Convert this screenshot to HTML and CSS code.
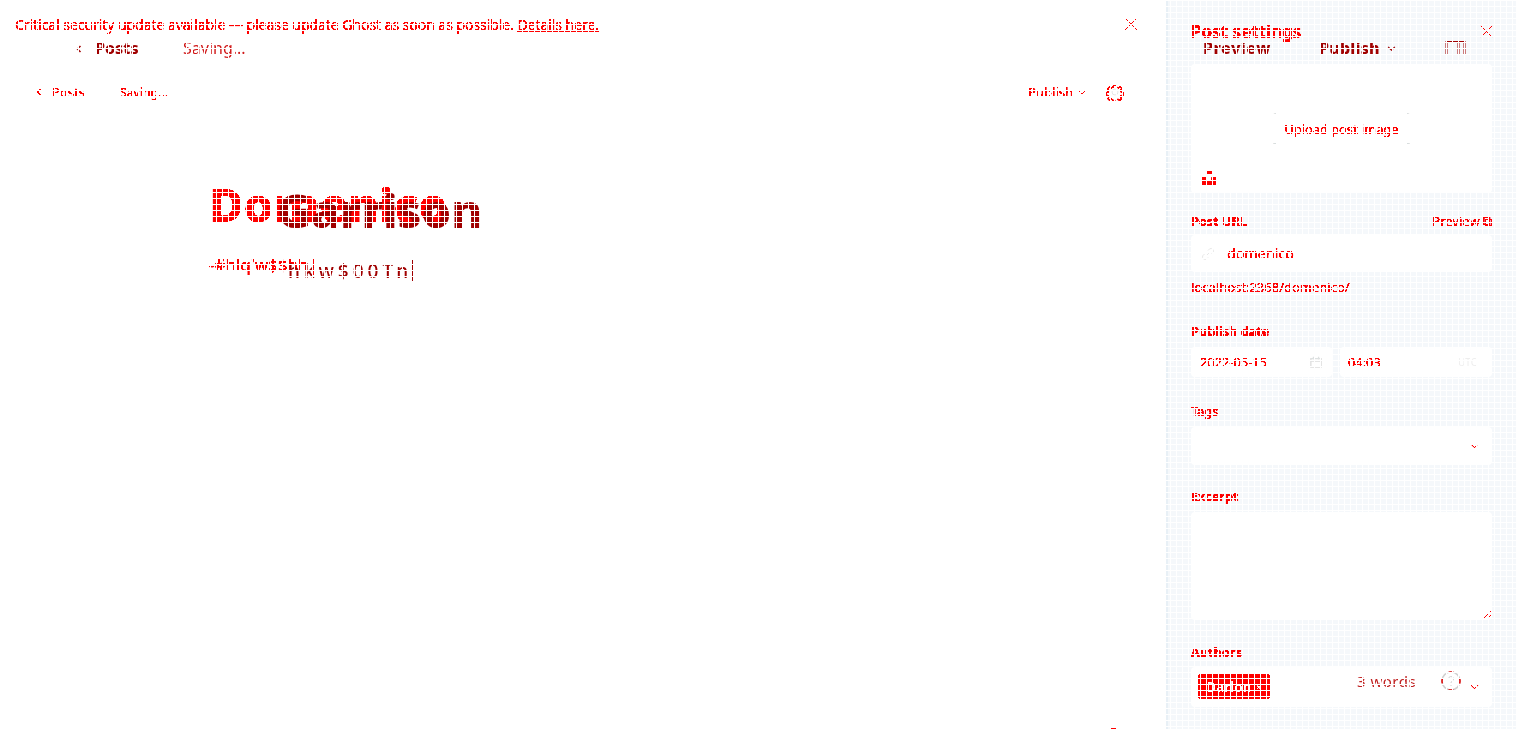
FILE: index.html
```html
<!DOCTYPE html>
<html lang="en">
<head>
<meta charset="utf-8">
<title>Post settings</title>
<link rel="stylesheet" href="styles.css">
</head>
<body>
<svg class="defs" aria-hidden="true"><filter id="hard" color-interpolation-filters="sRGB" x="0" y="0" width="100%" height="100%"><feComponentTransfer><feFuncG type="table" tableValues="0 0 0 0 0 0 0 0 .85 .9 1"/><feFuncB type="table" tableValues="0 0 0 0 0 0 0 0 .85 .9 1"/></feComponentTransfer></filter></svg>
<div class="page">
  <main class="main">
    <div class="banner">
      <p class="banner-text">Critical security update available — please update Ghost as soon as possible. <a class="banner-link" href="#">Details here.</a></p>
      <svg class="x-icon" viewBox="0 0 14 14"><path d="M1 1l12 12M13 1L1 13"/></svg>
    </div>
    <header class="bar">
      <div class="bar-left">
        <svg class="back" viewBox="0 0 6 8"><path d="M4.5 1L1.5 4l3 3"/></svg>
        <span>Posts</span>
        <span class="saving">Saving...</span>
      </div>
      <div class="bar-right">
        <span>Publish</span>
        <svg class="chev" viewBox="0 0 10 6"><path d="M1 1l4 4 4-4"/></svg>
        <svg class="gear" viewBox="0 0 24 24"><circle class="gear-in" cx="12" cy="12" r="4"/><path d="M10 2h4l.6 3 2.4 1 2.6-1.6 2.4 2.800-1.700 2.400.7 2.400 3 .6v3.800l-3 .6-.9 2.300 1.700 2.600-2.800 2.600-2.500-1.800-2.400 1-.6 3h-4l-.6-3-2.400-1-2.600 1.800-2.600-2.600 1.700-2.600-1-2.300-3-.6v-3.800l3-.6 1-2.400-1.800-2.400 2.600-2.800 2.500 1.600 2.500-1z" transform="translate(1.200 1.200) scale(.9)"/></svg>
      </div>
    </header>
    <section class="editor">
      <h1 class="title">Domenico</h1>
      <p class="body-text">-#hlq'w$$hh|</p>
    </section>
  </main>

  <aside class="panel">
    <div class="panel-head">
      <h2 class="panel-title">Post settings</h2>
      <svg class="x-icon" viewBox="0 0 14 14"><path d="M1 1l12 12M13 1L1 13"/></svg>
    </div>
    <div class="image-box">
      <button class="upload">Upload post image</button>
      <svg class="unsplash" viewBox="0 0 32 32"><path d="M10 9V0h12v9H10zm12 5h10v18H0V14h10v9h12v-9z"/></svg>
    </div>
    <div class="label-row label-url"><label class="label">Post URL</label><span class="preview">Preview ⧉</span></div>
    <div class="field field-url">
      <svg class="link" viewBox="0 0 16 16"><path d="M6 10l4-4M4 8l-2 2a3 3 0 0 0 4 4l2-2M8 4l2-2a3 3 0 0 1 4 4l-2 2"/></svg>
      <span>domenico</span>
    </div>
    <p class="url-hint">localhost:2368/domenico/</p>
    <label class="label label-date">Publish date</label>
    <div class="date-row">
      <div class="field field-date">
        <span>2022-05-15</span>
        <svg class="cal" viewBox="0 0 14 14"><path d="M1 3h12v10H1zM1 6h12M4 1v3M10 1v3"/></svg>
      </div>
      <div class="field field-time">
        <span>04:03</span>
        <span class="utc">UTC</span>
      </div>
    </div>
    <label class="label label-plain label-tags">Tags</label>
    <div class="field field-tags"><svg class="chev chev-end" viewBox="0 0 10 6"><path d="M1 1l4 4 4-4"/></svg></div>
    <label class="label label-excerpt">Excerpt</label>
    <div class="field field-excerpt"><svg class="grip" viewBox="0 0 8 8"><path d="M0 8l8-8M4 8l4-4"/></svg></div>
    <label class="label label-authors">Authors</label>
    <div class="field field-authors">
      <span class="chip">Darlon <span class="chip-x">×</span></span>
      <svg class="chev chev-end" viewBox="0 0 10 6"><path d="M1 1l4 4 4-4"/></svg>
    </div>
  </aside>
</div>

<div class="ghosts" aria-hidden="true">
  <svg class="ghost g-back" viewBox="0 0 6 8"><path d="M4.500 1L1.500 4l3 3"/></svg>
  <span class="ghost g-posts">Posts</span>
  <span class="ghost g-saving">Saving...</span>
  <span class="ghost g-preview">Preview</span>
  <span class="ghost g-publish">Publish</span>
  <svg class="ghost g-chev" viewBox="0 0 10 6"><path d="M1 1l4 4 4-4"/></svg>
  <svg class="ghost g-side" viewBox="0 0 20 14"><path d="M1 13V1h18v12M13 1v12"/></svg>
  <span class="ghost g-title">Garrison</span>
  <span class="ghost g-body">hkw$00Tn</span>
  <i class="ghost g-caret"></i>
  <i class="ghost g-tick"></i>
  <span class="ghost g-words">3 words</span>
  <svg class="ghost g-help" viewBox="0 0 20 20"><circle cx="10" cy="10" r="9"/><circle class="g-help-dash" cx="10" cy="10" r="9"/><path class="g-help-q" d="M7.500 8a2.500 2.500 0 1 1 3.500 2.300c-.7.3-1 .7-1 1.700M10 14v1"/></svg>
</div>
<div class="grid-overlay"></div>
</body>
</html>
```
FILE: styles.css
```css
* { box-sizing: border-box; }
html, body { margin: 0; height: 100%; overflow: hidden; background: #fff; }
body { font-family: "Noto Sans", sans-serif; color: #f00; font-size: 14px; }
.defs { position: absolute; width: 0; height: 0; }
.page { display: flex; height: 729px; filter: url(#hard); background: #fff; }
svg path, svg circle { fill: none; stroke: #f00; stroke-width: 1; }

.main { flex: 1; min-width: 0; display: flex; flex-direction: column; }
.banner { display: flex; align-items: center; justify-content: space-between; height: 48px; padding: 0 28px 0 15px; }
.banner-text { margin: 0; font-size: 14px; letter-spacing: -.055px; }
.banner-link { color: #f00; text-decoration: underline; }
.x-icon { width: 14px; height: 14px; }
.bar { display: flex; justify-content: space-between; align-items: center; height: 40px; margin-top: 24px; padding: 0 42px 0 36px; font-size: 13px; }
.bar-left { display: flex; align-items: center; gap: 0; }
.back { width: 6px; height: 8px; margin-right: 10px; }
.saving { margin-left: 35px; font-size: 12.300px; }
.bar-right { display: flex; align-items: center; }
.chev { width: 10px; height: 6px; margin-left: 4px; }
.gear { width: 18px; height: 18px; margin-left: 19px; }
.gear path { stroke-width: 1.600; }
.gear-in { stroke: #ddd !important; }
.editor { padding: 64px 0 0 209px; }
.title { margin: 0; font-size: 47px; line-height: 56px; font-weight: 800; letter-spacing: 0; }
.body-text { margin: 23px 0 0; font-size: 17px; line-height: 20px; }

.panel { width: 350px; flex: none; height: 729px; overflow: hidden; padding: 0 24px 0 23px; background: #f5f8fb; border-left: 2px solid #e8f0f6; display: flex; flex-direction: column; align-items: stretch; }
.panel-head { display: flex; justify-content: space-between; align-items: center; height: 24px; margin-top: 19px; }
.panel-title { margin: 0; font-size: 17px; font-weight: 700; letter-spacing: 0; }
.panel-head .x-icon { margin-right: -1px; width: 13px; height: 13px; }
.image-box { position: relative; height: 129px; margin-top: 21px; background: #fff; border-radius: 4px; display: flex; align-items: center; justify-content: center; }
.upload { font: inherit; font-size: 12.800px; color: #f00; width: 137px; height: 32px; padding: 0; border: 0; border-radius: 3px; margin-top: 0;
  background: linear-gradient(#d8d8d8, #d8d8d8) 0 0 / 3px 2px no-repeat, linear-gradient(#d8d8d8, #d8d8d8) 100% 0 / 3px 2px no-repeat, linear-gradient(#d8d8d8, #d8d8d8) 0 100% / 3px 2px no-repeat, linear-gradient(#d8d8d8, #d8d8d8) 100% 100% / 3px 2px no-repeat, #fff; }
.unsplash { position: absolute; left: 11px; bottom: 8px; width: 14px; height: 14px; }
.unsplash path { fill: #f00; stroke: none; }
.label-row { display: flex; justify-content: space-between; align-items: center; }
.label { display: block; font-size: 12.700px; line-height: 16px; font-weight: 700; }
.label-plain { font-weight: 500; }
.label-url { margin-top: 20px; line-height: 16px; }
.preview { font-size: 13px; line-height: 16px; }
.field { background: #fff; border-radius: 4px; font-size: 13px; display: flex; align-items: center; }
.field-url { height: 37px; margin-top: 6px; padding-left: 10px; font-size: 14.300px; }
.link { width: 14px; height: 14px; margin-right: 12px; }
.link path { stroke: #e4e4e4; }
.url-hint { margin: 7px 0 0; font-size: 13px; line-height: 16px; }
.label-date { margin-top: 28px; }
.date-row { display: flex; gap: 8px; margin-top: 8px; }
.field-date { width: 141px; height: 30px; padding: 0 10px 0 9px; justify-content: space-between; font-size: 12.800px; }
.field-time { flex: 1; height: 30px; padding: 0 15px 0 8px; justify-content: space-between; font-size: 12.800px; }
.cal { width: 12px; height: 12px; margin-right: 0; }
.cal path { stroke: #ddd; stroke-width: 1.500; }
.utc { color: #eee; font-size: 10px; }
.label-tags { margin-top: 26px; }
.field-tags { height: 38px; margin-top: 8px; justify-content: flex-end; padding-right: 13px; }
.chev-end { width: 9px; height: 6px; }
.chev-end path { stroke-width: .8; }
.label-excerpt { margin-top: 23px; }
.field-excerpt { position: relative; height: 108px; margin-top: 8px; }
.grip { position: absolute; right: 1px; bottom: 1px; width: 8px; height: 8px; }
.label-authors { margin-top: 24px; }
.field-authors { height: 40px; margin-top: 7px; padding: 0 13px 0 7px; justify-content: space-between; }
.chip { display: inline-flex; align-items: center; justify-content: center; gap: 4px; width: 72px; height: 25px; margin-top: -1px; background: #f00; color: #fff; border-radius: 4px; font-size: 13.500px; font-weight: 700; }
.chip-x { font-size: 11px; }

.ghosts { position: fixed; inset: 0; pointer-events: none; }
.ghost { position: absolute; color: #a00000; font-weight: 700; white-space: nowrap; }
svg.ghost path, svg.ghost circle { stroke: #a00000; stroke-width: 1.500; }
.g-back { left: 76px; top: 45px; width: 6px; height: 8px; }
.g-posts { left: 95px; top: 39px; font-size: 16px; line-height: 18px; font-weight: 800; }
.g-saving { left: 183px; top: 39px; font-size: 16px; line-height: 18px; font-weight: 400; color: #d01818; }
.g-preview { left: 1203px; top: 38px; font-size: 16px; line-height: 20px; font-weight: 800; letter-spacing: .5px; }
.g-publish { left: 1319px; top: 38px; font-size: 16px; line-height: 20px; font-weight: 800; letter-spacing: .2px; }
.g-chev { left: 1387px; top: 46px; width: 9px; height: 5px; }
.g-side { left: 1445px; top: 41px; width: 21px; height: 14px; }
svg.ghost.g-side path { stroke-width: 2; }
.g-title { left: 277px; top: 182px; font-size: 47px; line-height: 56px; font-weight: 800; }
.g-body { left: 288px; top: 261px; font-size: 19px; line-height: 20px; font-weight: 500; letter-spacing: 4px; }
.g-caret { left: 412px; top: 260px; width: 1px; height: 21px; background: #a00000; }
.g-tick { left: 1110px; top: 728px; width: 6px; height: 1px; background: #f00; }
.g-words { left: 1357px; top: 672px; font-size: 15px; line-height: 18px; font-weight: 400; letter-spacing: .5px; color: #c02020; }
.g-help { left: 1441px; top: 671px; width: 20px; height: 20px; }
svg.ghost.g-help circle { stroke: #d0d0d0; stroke-width: 1.500; }
svg.ghost.g-help .g-help-dash { stroke: #e00000; stroke-dasharray: 5 9.100; stroke-dashoffset: 2.500; }
svg.ghost.g-help .g-help-q { stroke: #d0d0d0; stroke-width: 1; }

.grid-overlay { position: fixed; inset: 0; pointer-events: none; background-image: linear-gradient(to right, #fff 1px, transparent 1px), linear-gradient(to bottom, #fff 1px, transparent 1px); background-size: 6px 6px; }
```
